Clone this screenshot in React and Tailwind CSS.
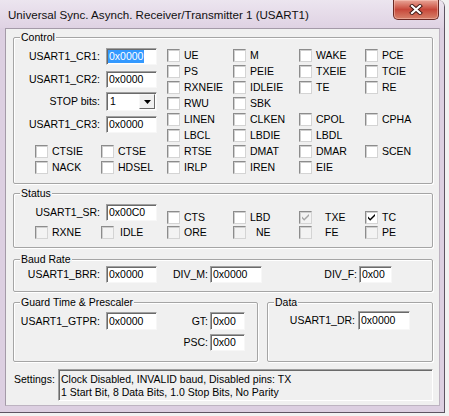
import React from "react";

const Check = ({ label, gap = "ml-[4px]", checked = false, dim = false, grey = false }) => (
  <div className="flex items-center h-[13px]">
    <span
      className={`relative w-[13px] h-[13px] shrink-0 border border-t-[#8c8c8c] border-l-[#8c8c8c] border-r-[#d4d4d4] border-b-[#d4d4d4] shadow-[inset_1px_1px_0_#cfcfcf] ${dim ? "bg-[#f3f3f3]" : "bg-white"}`}
    >
      {checked && (
        <svg className="absolute left-[1px] top-[1px]" width="9" height="9" viewBox="0 0 9 9">
          <polygon points="1,3.5 1,5.5 3.2,7.8 8,3 8,1 3.2,5.8" fill={grey ? "#a6a6a6" : "#000"} />
        </svg>
      )}
    </span>
    <span className={`${gap} leading-[13px] whitespace-nowrap`}>{label}</span>
  </div>
);

const Field = ({ value, w = "w-[51px]", h = "h-[17px]", selected = false }) => (
  <div
    className={`${w} ${h} shrink-0 bg-white border border-t-[#a0a0a0] border-l-[#a0a0a0] border-r-[#f7f7f7] border-b-[#f7f7f7] shadow-[inset_1px_1px_0_#6a6a6a] pl-[1px] flex items-center leading-[13px]`}
  >
    {selected ? <span className="bg-[#3399ff] text-white px-[1px]">{value}</span> : <span className="px-[1px]">{value}</span>}
  </div>
);

const Group = ({ title, className = "", children }) => (
  <div
    className={`relative rounded-[2px] border border-[#a5a5a5] shadow-[inset_1px_1px_0_#ffffff,1px_1px_0_#ffffff] ${className}`}
  >
    <span className="absolute left-[6px] top-[-7px] bg-[#f0f0f0] px-[1px] leading-[13px]">{title}</span>
    {children}
  </div>
);

const Labeled = ({ label, children, gap = "gap-[6px]", className = "" }) => (
  <div className={`flex items-center justify-end ${gap} ${className}`}>
    <span className="leading-[13px] whitespace-nowrap">{label}</span>
    {children}
  </div>
);

export default function App() {
  const cr1Grid = [
    ["UE", "M", "WAKE", "PCE"],
    ["PS", "PEIE", "TXEIE", "TCIE"],
    ["RXNEIE", "IDLEIE", "TE", "RE"],
    ["RWU", "SBK", null, null],
    ["LINEN", "CLKEN", "CPOL", "CPHA"],
    ["LBCL", "LBDIE", "LBDL", null],
  ];
  const cr3Grid = [
    ["CTSIE", "CTSE", "RTSE", "DMAT", "DMAR", "SCEN"],
    ["NACK", "HDSEL", "IRLP", "IREN", "EIE", null],
  ];

  return (
    <div className="w-[449px] h-[416px] bg-[#f2f2f2] overflow-hidden font-['Liberation_Sans',Arial,sans-serif] text-[10.5px] text-black">
      <div className="w-[445px] h-[413px] flex flex-col bg-[#dccfe1] rounded-tr-[7px] border-r border-b border-[#5d5462]">
        {/* title bar */}
        <div className="h-[28px] flex items-start justify-between bg-gradient-to-b from-[#ece5ef] to-[#dfd2e3] rounded-tr-[6px]">
          <span className="pl-[8px] pt-[7px] text-[11.6px] leading-[15px] text-[#101010] whitespace-nowrap">
            Universal Sync. Asynch. Receiver/Transmitter 1 (USART1)
          </span>
          <div className="mr-[5px] w-[46px] h-[20px] rounded-b-[5px] border border-t-0 border-[#6c2a24] bg-gradient-to-b from-[#e8a598] via-[#c7473a] to-[#d6806a] shadow-[inset_0_0_0_1px_rgba(255,210,200,0.45)] flex items-center justify-center">
            <svg width="14" height="11" viewBox="0 0 14 11">
              <path d="M3 2 L11 9 M11 2 L3 9" stroke="#3d1713" strokeWidth="4" strokeLinecap="square" />
              <path d="M3 2 L11 9 M11 2 L3 9" stroke="#ffffff" strokeWidth="2.2" strokeLinecap="square" />
            </svg>
          </div>
        </div>

        {/* client area */}
        <div className="ml-[5px] w-[435px] h-[378px] border border-t-[#a49aa8] border-l-[#a49aa8] border-r-[#bdb3c1] border-b-[#bdb3c1] bg-[#f0f0f0] flex flex-col">
          {/* Control */}
          <Group title="Control" className="mt-[8px] ml-[7px] w-[420px] h-[147px] pt-[10px]">
            <div className="flex">
              <div className="w-[153px] pr-[10px] flex flex-col items-end">
                <Labeled label="USART1_CR1:">
                  <Field value="0x0000" selected />
                </Labeled>
                <Labeled label="USART1_CR2:" className="mt-[6px]">
                  <Field value="0x0000" />
                </Labeled>
                <Labeled label="STOP bits:" className="mt-[4px]">
                  <div className="relative w-[51px] h-[19px] bg-white border border-t-[#a0a0a0] border-l-[#a0a0a0] border-r-[#f7f7f7] border-b-[#f7f7f7] shadow-[inset_1px_1px_0_#6a6a6a] pl-[3px] flex items-center justify-between">
                    <span className="leading-[13px]">1</span>
                    <span className="w-[16px] h-[15px] mr-[1px] bg-[#f0f0f0] border border-t-[#f8f8f8] border-l-[#f8f8f8] border-r-[#696969] border-b-[#696969] flex items-center justify-center">
                      <svg width="7" height="4" viewBox="0 0 7 4">
                        <polygon points="0,0 7,0 3.5,4" fill="#000" />
                      </svg>
                    </span>
                  </div>
                </Labeled>
                <Labeled label="USART1_CR3:" className="mt-[5px]">
                  <Field value="0x0000" />
                </Labeled>
              </div>
              <div className="mt-[1px] grid grid-cols-[repeat(4,66px)] auto-rows-[16px]">
                {cr1Grid.flat().map((l, i) => (
                  <div key={i}>{l && <Check label={l} />}</div>
                ))}
              </div>
            </div>
            <div className="ml-[21px] grid grid-cols-[repeat(6,66px)] auto-rows-[16px]">
              {cr3Grid.flat().map((l, i) => (
                <div key={i}>{l && <Check label={l} />}</div>
              ))}
            </div>
          </Group>

          {/* Status */}
          <Group title="Status" className="mt-[9px] ml-[7px] w-[420px] h-[55px] pt-[10px]">
            <div className="flex items-start">
              <Labeled label="USART1_SR:" className="w-[153px] pr-[10px]">
                <Field value="0x00C0" />
              </Labeled>
              <div className="mt-[7px] grid grid-cols-[repeat(4,66px)] auto-rows-[15px]">
                <Check label="CTS" />
                <Check label="LBD" />
                <Check label="TXE" gap="ml-[13px]" checked dim grey />
                <Check label="TC" checked />
              </div>
            </div>
            <div className="ml-[21px] grid grid-cols-[repeat(6,66px)] auto-rows-[15px]">
              <Check label="RXNE" dim />
              <Check label="IDLE" gap="ml-[6px]" dim />
              <Check label="ORE" dim />
              <Check label="NE" gap="ml-[10px]" dim />
              <Check label="FE" gap="ml-[13px]" dim />
              <Check label="PE" dim />
            </div>
          </Group>

          {/* Baud Rate */}
          <Group title="Baud Rate" className="mt-[11px] ml-[7px] w-[420px] h-[33px] pt-[6px]">
            <div className="flex items-center">
              <Labeled label="USART1_BRR:" className="w-[153px] pr-[10px]">
                <Field value="0x0000" />
              </Labeled>
              <Labeled label="DIV_M:" gap="gap-[2px]" className="w-[95px]">
                <Field value="0x0000" w="w-[52px]" />
              </Labeled>
              <Labeled label="DIV_F:" gap="gap-[2px]" className="w-[130px]">
                <Field value="0x00" w="w-[33px]" />
              </Labeled>
            </div>
          </Group>

          {/* Guard time + Data */}
          <div className="mt-[10px] ml-[7px] flex">
            <Group title="Guard Time & Prescaler" className="w-[245px] h-[60px] pt-[9px]">
              <div className="flex items-center">
                <Labeled label="USART1_GTPR:" className="w-[153px] pr-[10px]">
                  <Field value="0x0000" h="h-[18px]" />
                </Labeled>
                <Labeled label="GT:" gap="gap-[2px]" className="w-[78px]">
                  <Field value="0x00" w="w-[35px]" h="h-[18px]" />
                </Labeled>
              </div>
              <Labeled label="PSC:" gap="gap-[2px]" className="mt-[4px] ml-[153px] w-[78px]">
                <Field value="0x00" w="w-[35px]" />
              </Labeled>
            </Group>
            <Group title="Data" className="ml-[9px] w-[166px] h-[60px] pt-[8px]">
              <Labeled label="USART1_DR:" gap="gap-[3px]" className="w-[142px]">
                <Field value="0x0000" w="w-[52px]" h="h-[19px]" />
              </Labeled>
            </Group>
          </div>

          {/* Settings */}
          <div className="mt-[7px] ml-[8px] flex items-start">
            <span className="w-[44px] mt-[4px] leading-[13px]">Settings:</span>
            <div className="w-[375px] h-[32px] border border-t-[#a0a0a0] border-l-[#a0a0a0] border-r-[#ffffff] border-b-[#ffffff] shadow-[inset_1px_1px_0_#6a6a6a] pl-[2px] pt-[3px] leading-[13px]">
              <div>Clock Disabled, INVALID baud, Disabled pins: TX</div>
              <div>1 Start Bit, 8 Data Bits, 1.0 Stop Bits, No Parity</div>
            </div>
          </div>
        </div>
      </div>
    </div>
  );
}
